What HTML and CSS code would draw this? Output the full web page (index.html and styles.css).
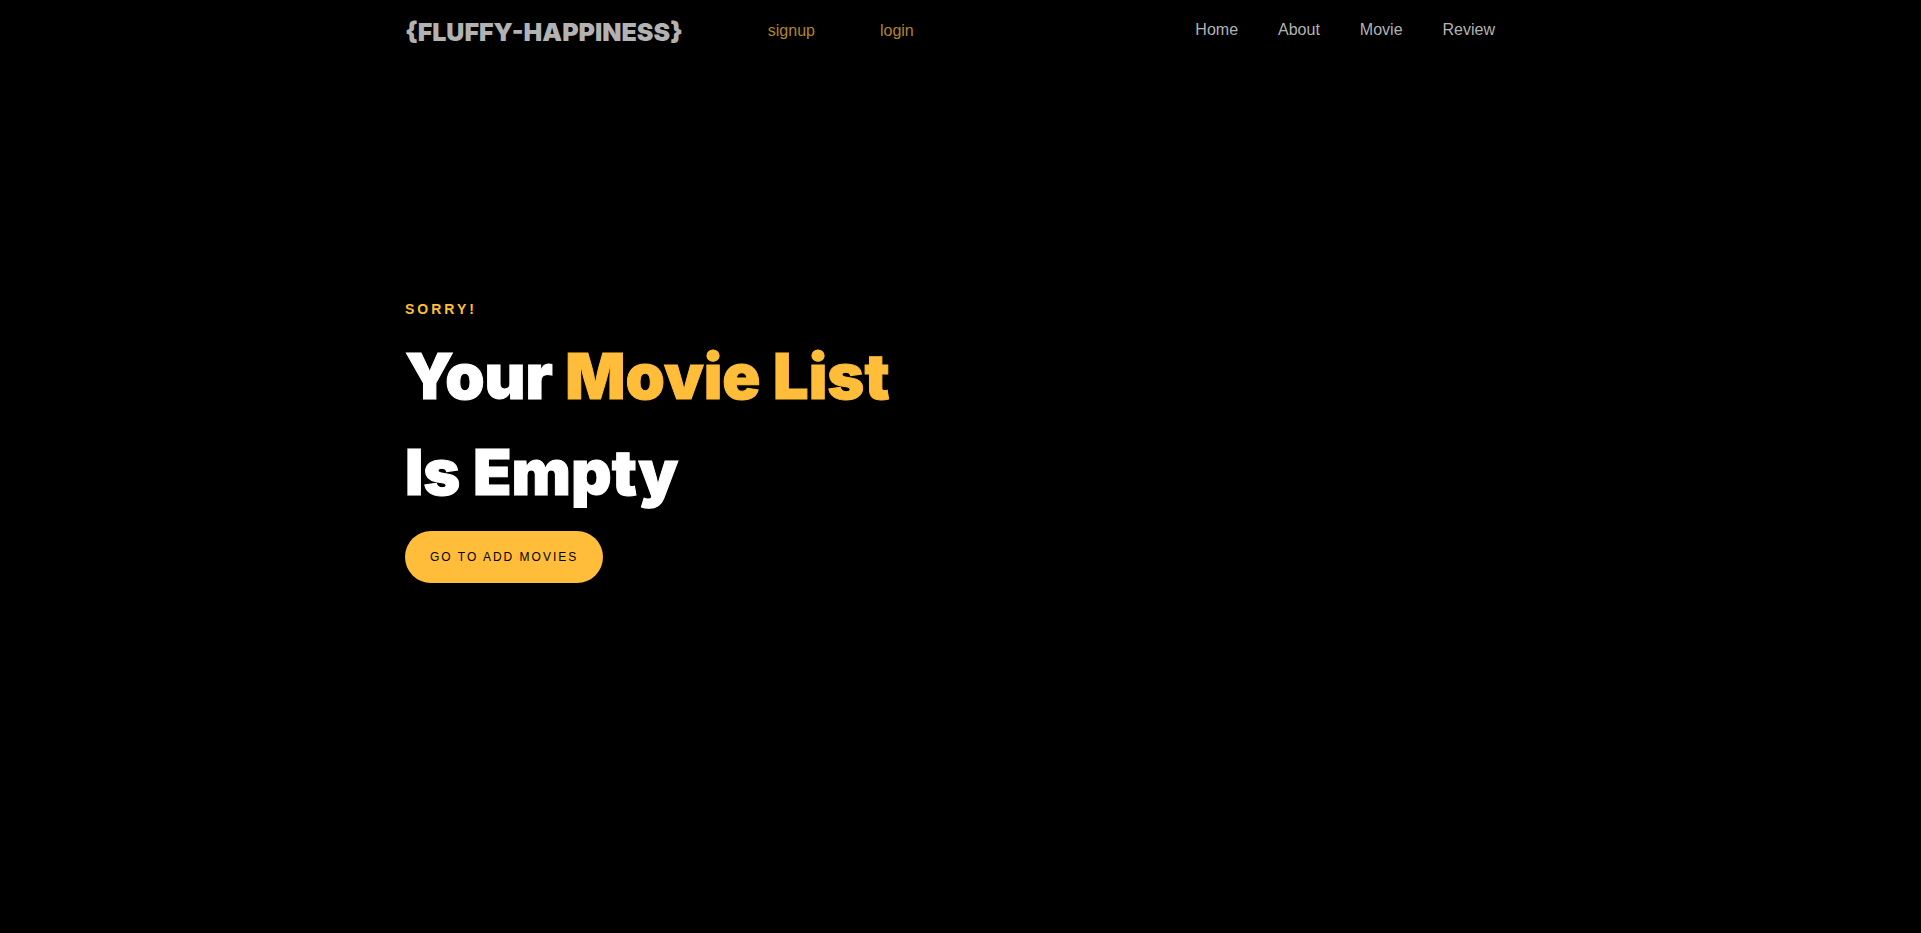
FILE: index.html
```html
<!DOCTYPE html>
<html lang="en">
<head>
<meta charset="utf-8">
<title>Fluffy Happiness</title>
<link rel="stylesheet" href="styles.css">
</head>
<body>
<header class="navbar">
  <div class="container navbar-row">
    <a class="brand" href="#">{FLUFFY-HAPPINESS}</a>
    <nav class="account" aria-label="Account">
      <a href="#">signup</a>
      <a href="#">login</a>
    </nav>
    <nav class="menu" aria-label="Main">
      <a href="#">Home</a>
      <a href="#">About</a>
      <a href="#">Movie</a>
      <a href="#">Review</a>
    </nav>
  </div>
</header>
<main class="hero">
  <div class="container">
    <p class="eyebrow">Sorry!</p>
    <h1 class="title">Your <span class="accent">Movie List</span><br>Is Empty</h1>
    <button class="cta" type="button">Go to add movies</button>
  </div>
</main>
</body>
</html>
```
FILE: styles.css
```css
* {
  box-sizing: border-box;
}

body {
  margin: 0;
  min-height: 100vh;
  padding-right: 1px;
  background: #000;
  color: #fff;
  font-family: "Liberation Sans", Arial, sans-serif;
  font-size: 16px;
}

a {
  color: inherit;
  text-decoration: none;
}

.container {
  width: 100%;
  max-width: 1140px;
  margin: 0 auto;
  padding: 0 15px;
}

.navbar-row {
  display: flex;
  align-items: flex-start;
  padding-top: 14px;
}

.brand {
  color: #b2b2b2;
  font-family: Inter, "Liberation Sans", sans-serif;
  font-size: 25px;
  font-weight: 900;
  line-height: 36px;
}

.account {
  display: flex;
  gap: 65px;
  margin-left: 85px;
  color: #b2842a;
  line-height: 34px;
}

.menu {
  display: flex;
  gap: 40px;
  margin-left: auto;
  padding-right: 20px;
  color: #b2b2b2;
  line-height: 32px;
}

.hero {
  padding-top: 246px;
}

.eyebrow {
  margin: 0;
  color: #ffbd39;
  font-size: 14px;
  font-weight: 700;
  letter-spacing: 3px;
  line-height: 26px;
  text-transform: uppercase;
}

.title {
  margin: 0;
  padding: 6px 0 11px;
  font-family: Inter, "Liberation Sans", sans-serif;
  font-size: 63px;
  font-weight: 900;
  line-height: 96px;
  -webkit-text-stroke: 1px currentColor;
}

.accent {
  color: #ffbd39;
}

.cta {
  padding: 0 25px;
  border: 0;
  border-radius: 26px;
  background: #ffbd39;
  color: #000;
  font-family: inherit;
  font-size: 12px;
  letter-spacing: 2px;
  line-height: 52px;
  text-transform: uppercase;
}
```
